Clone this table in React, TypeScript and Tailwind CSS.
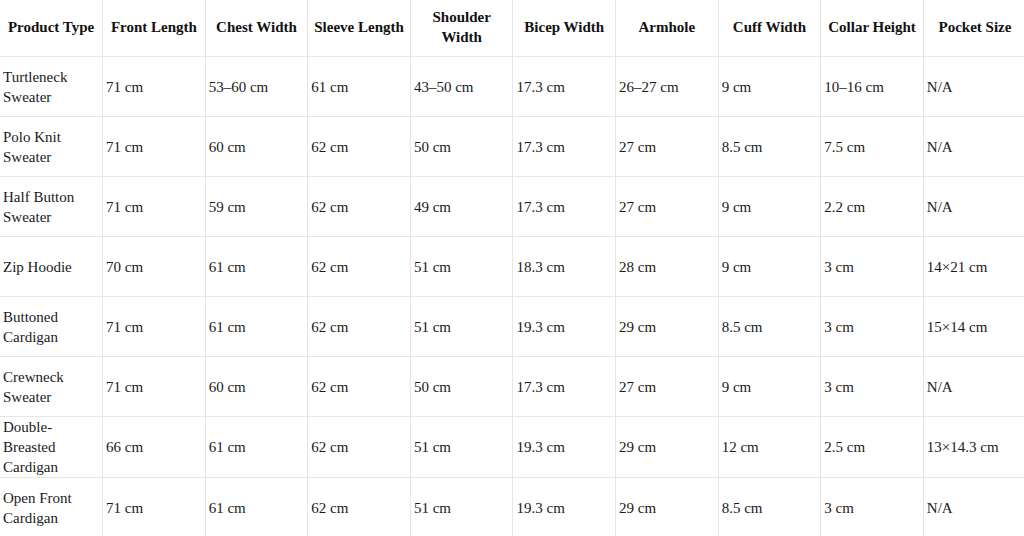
const headers = [
  'Product Type',
  'Front Length',
  'Chest Width',
  'Sleeve Length',
  'Shoulder Width',
  'Bicep Width',
  'Armhole',
  'Cuff Width',
  'Collar Height',
  'Pocket Size',
]

const rows: string[][] = [
  ['Turtleneck Sweater', '71 cm', '53–60 cm', '61 cm', '43–50 cm', '17.3 cm', '26–27 cm', '9 cm', '10–16 cm', 'N/A'],
  ['Polo Knit Sweater', '71 cm', '60 cm', '62 cm', '50 cm', '17.3 cm', '27 cm', '8.5 cm', '7.5 cm', 'N/A'],
  ['Half Button Sweater', '71 cm', '59 cm', '62 cm', '49 cm', '17.3 cm', '27 cm', '9 cm', '2.2 cm', 'N/A'],
  ['Zip Hoodie', '70 cm', '61 cm', '62 cm', '51 cm', '18.3 cm', '28 cm', '9 cm', '3 cm', '14×21 cm'],
  ['Buttoned Cardigan', '71 cm', '61 cm', '62 cm', '51 cm', '19.3 cm', '29 cm', '8.5 cm', '3 cm', '15×14 cm'],
  ['Crewneck Sweater', '71 cm', '60 cm', '62 cm', '50 cm', '17.3 cm', '27 cm', '9 cm', '3 cm', 'N/A'],
  ['Double-Breasted Cardigan', '66 cm', '61 cm', '62 cm', '51 cm', '19.3 cm', '29 cm', '12 cm', '2.5 cm', '13×14.3 cm'],
  ['Open Front Cardigan', '71 cm', '61 cm', '62 cm', '51 cm', '19.3 cm', '29 cm', '8.5 cm', '3 cm', 'N/A'],
]

export default function App() {
  return (
    <div className="w-[1024px] h-[536px] overflow-hidden bg-white font-['Liberation_Serif','Times_New_Roman',serif] text-[15px] leading-5 text-[#1a1a1a]">
      <table className="w-[1026px] table-fixed border-collapse">
        <thead>
          <tr className="h-[56px]">
            {headers.map((h, i) => (
              <th
                key={h}
                className={`border-b border-[#e6e6e6] px-[3px] pb-[2px] text-center font-bold text-[#111] ${i > 0 ? 'border-l' : ''}`}
              >
                {h}
              </th>
            ))}
          </tr>
        </thead>
        <tbody>
          {rows.map((r) => {
            // the three-line row fills its full height, so no top nudge there
            const tall = r[0].startsWith('Double')
            return (
              <tr key={r[0]} className="h-[60px]">
                {r.map((c, i) => (
                  <td
                    key={i}
                    className={`border-b border-[#e6e6e6] px-[3px] text-left align-middle ${tall ? '' : 'pt-[2px]'} ${i > 0 ? 'border-l' : ''}`}
                  >
                    {c}
                  </td>
                ))}
              </tr>
            )
          })}
        </tbody>
      </table>
    </div>
  )
}
